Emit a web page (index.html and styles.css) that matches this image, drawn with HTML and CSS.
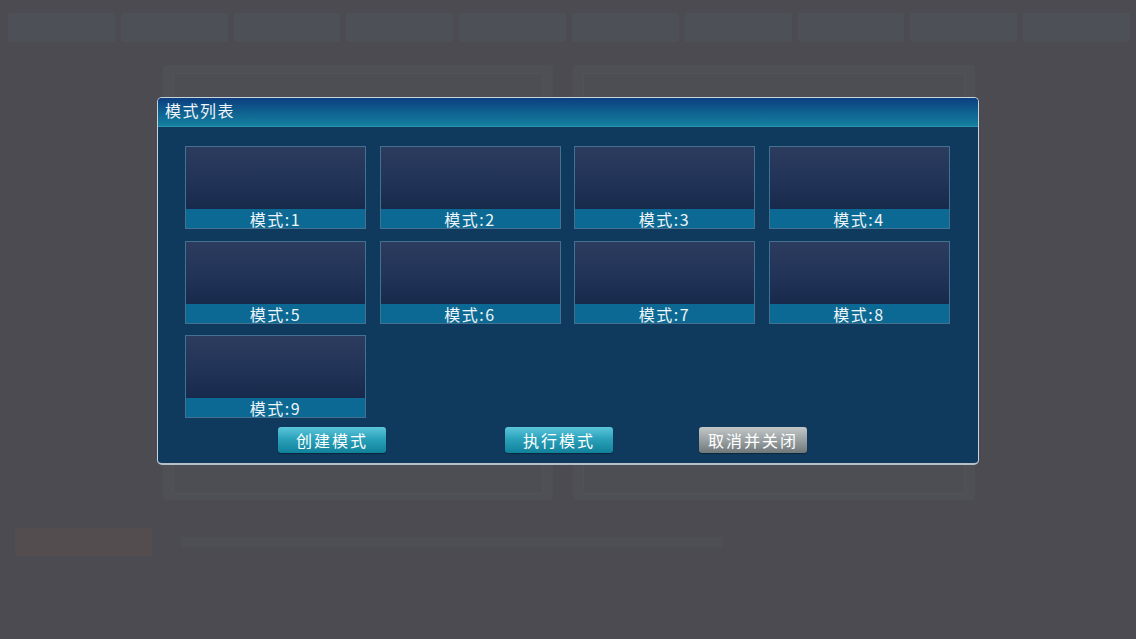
FILE: index.html
```html
<!DOCTYPE html>
<html lang="zh">
<head>
<meta charset="utf-8">
<title>模式列表</title>
<link rel="stylesheet" href="styles.css">
</head>
<body>
<div class="page">
  <div class="tabs">
    <div class="tab"></div><div class="tab"></div><div class="tab"></div><div class="tab"></div><div class="tab"></div>
    <div class="tab"></div><div class="tab"></div><div class="tab"></div><div class="tab"></div><div class="tab"></div>
  </div>
  <div class="panels">
    <div class="panel"><div class="panel-inner"></div></div>
    <div class="panel panel-right"><div class="panel-inner"></div></div>
  </div>
  <div class="status">
    <div class="status-btn"></div>
    <div class="status-text"></div>
  </div>
</div>

<div class="dialog">
  <div class="dialog-head">模式列表</div>
  <div class="dialog-body">
    <div class="grid">
      <div class="card"><div class="thumb"></div><div class="cap">模式:1</div></div>
      <div class="card"><div class="thumb"></div><div class="cap">模式:2</div></div>
      <div class="card"><div class="thumb"></div><div class="cap">模式:3</div></div>
      <div class="card"><div class="thumb"></div><div class="cap">模式:4</div></div>
      <div class="card"><div class="thumb"></div><div class="cap">模式:5</div></div>
      <div class="card"><div class="thumb"></div><div class="cap">模式:6</div></div>
      <div class="card"><div class="thumb"></div><div class="cap">模式:7</div></div>
      <div class="card"><div class="thumb"></div><div class="cap">模式:8</div></div>
      <div class="card"><div class="thumb"></div><div class="cap">模式:9</div></div>
    </div>
    <div class="actions">
      <button class="btn btn-create">创建模式</button>
      <button class="btn btn-run">执行模式</button>
      <button class="btn btn-gray">取消并关闭</button>
    </div>
  </div>
</div>
</body>
</html>
```

FILE: styles.css
```css
html, body {
  margin: 0;
  padding: 0;
}
body {
  width: 1136px;
  height: 639px;
  overflow: hidden;
  background: #4c4b52;
  font-family: "Noto Sans CJK SC", "Noto Sans", "Liberation Sans", sans-serif;
  position: relative;
}

/* dimmed background UI */
.page {
  display: flex;
  flex-direction: column;
  height: 639px;
}
.tabs {
  display: flex;
  gap: 6px;
  padding: 13px 6px 0 8px;
  height: 29px;
}
.tab {
  flex: 1;
  background: #4e5058;
  border-radius: 2px;
}
.panels {
  display: flex;
  gap: 20px;
  padding: 23px 0 0 163px;
  height: 435px;
}
.panel {
  width: 390px;
  height: 435px;
  background: #4f5056;
  border-radius: 4px;
  padding: 8px 10px;
  box-sizing: border-box;
}
.panel-right {
  width: 402px;
}
.panel-inner {
  height: 100%;
  background: #4d4d54;
  border: 1px solid #525359;
  border-radius: 3px;
}
.status {
  display: flex;
  align-items: center;
  gap: 30px;
  padding: 28px 0 0 15px;
}
.status-btn {
  width: 137px;
  height: 28px;
  background: #534d50;
  border-radius: 2px;
}
.status-text {
  width: 540px;
  height: 10px;
  background: #4e4e55;
}

/* dialog overlay */
.dialog {
  position: absolute;
  left: 157px;
  top: 97px;
  width: 822px;
  height: 368px;
  box-sizing: border-box;
  border: 1px solid #c9d3dc;
  border-bottom: 2px solid #b6c0c8;
  border-radius: 5px;
  background: #0f3a5d;
  overflow: hidden;
  display: flex;
  flex-direction: column;
}
.dialog-head {
  height: 29px;
  box-sizing: border-box;
  padding: 1px 0 0 7px;
  background: linear-gradient(#0c3f80 0%, #0f5d8e 45%, #14809f 100%);
  border-bottom: 1px solid #2a93ad;
  color: #f2f6fa;
  font-size: 16px;
  letter-spacing: 1.5px;
  line-height: 22px;
}
.dialog-body {
  flex: 1;
  padding: 19px 0 0 27px;
  display: flex;
  flex-direction: column;
}
.grid {
  display: grid;
  grid-template-columns: repeat(4, 181px);
  grid-auto-rows: 83px;
  column-gap: 13.5px;
  row-gap: 11.5px;
}
.card {
  border: 1px solid #44718f;
  display: flex;
  flex-direction: column;
  background: #0b6993;
}
.thumb {
  flex: 1;
  background: linear-gradient(#2c3c5f 0%, #223458 50%, #172a4c 100%);
}
.cap {
  height: 19px;
  color: #eef4f8;
  font-size: 16px;
  letter-spacing: 1.5px;
  line-height: 21px;
  text-align: center;
  background: #0b6993;
}
.actions {
  display: flex;
  padding: 9px 0 0 93px;
}
.btn {
  width: 108px;
  height: 26px;
  border: none;
  border-radius: 3px;
  padding: 0;
  color: #ffffff;
  font-family: "Noto Sans CJK SC", "Noto Sans", sans-serif;
  font-size: 16px;
  letter-spacing: 2px;
  line-height: 24px;
  box-shadow: 0 1px 1px rgba(0,0,0,0.35);
}
.btn-create, .btn-run {
  background: linear-gradient(#5cc6dc 0%, #2ba2bb 45%, #11819a 100%);
}
.btn-run {
  margin-left: 119px;
}
.btn-gray {
  margin-left: 86px;
  background: linear-gradient(#c3c7c8 0%, #9aa1a3 50%, #6f7779 100%);
}
```
